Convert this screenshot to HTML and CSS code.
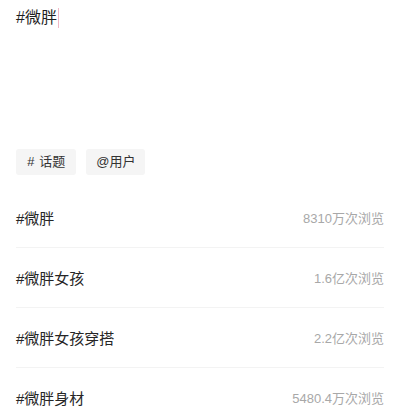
FILE: index.html
```html
<!DOCTYPE html>
<html>
<head>
<meta charset="utf-8">
<link rel="stylesheet" href="styles.css">
</head>
<body>
<div class="page">
  <div class="editor">
    <span class="typed">#微胖</span><span class="caret"></span>
  </div>
  <div class="chips">
    <div class="chip"><span class="hash">#</span><span>话题</span></div>
    <div class="chip chip-user"><span>@用户</span></div>
  </div>
  <div class="list">
    <div class="row"><span class="tag">#微胖</span><span class="views">8310万次浏览</span></div>
    <div class="row"><span class="tag">#微胖女孩</span><span class="views">1.6亿次浏览</span></div>
    <div class="row"><span class="tag">#微胖女孩穿搭</span><span class="views">2.2亿次浏览</span></div>
    <div class="row"><span class="tag">#微胖身材</span><span class="views">5480.4万次浏览</span></div>
  </div>
</div>
</body>
</html>
```
FILE: styles.css
```css
html, body {
  margin: 0;
  padding: 0;
  background: #ffffff;
}
body {
  font-family: "Liberation Sans", "Noto Sans CJK SC", sans-serif;
  color: #222;
}
.page {
  width: 400px;
  height: 415px;
  overflow: hidden;
  padding: 0 16px;
  box-sizing: border-box;
}
.editor {
  height: 36px;
  display: flex;
  align-items: center;
  font-size: 16px;
  line-height: 24px;
  color: #1f1f1f;
}
.caret {
  display: inline-block;
  width: 1.5px;
  height: 20px;
  background: #f0b8c6;
  margin-left: 1px;
}
.chips {
  display: flex;
  gap: 10px;
  margin-top: 113px;
}
.chip {
  height: 26px;
  padding: 0 11px;
  background: #f5f5f5;
  border-radius: 3px;
  font-size: 13px;
  line-height: 26px;
  color: #333;
  display: flex;
  align-items: center;
}
.chip-user {
  padding: 0 10px;
}
.hash {
  font-style: italic;
  margin-right: 5px;
}
.list {
  margin-top: 13px;
}
.row {
  height: 60px;
  display: flex;
  align-items: center;
  justify-content: space-between;
  border-bottom: 1px solid #f3f3f3;
  box-sizing: border-box;
}
.tag {
  font-size: 15px;
  color: #262626;
}
.views {
  font-size: 13px;
  color: #a8a8a8;
}
```
